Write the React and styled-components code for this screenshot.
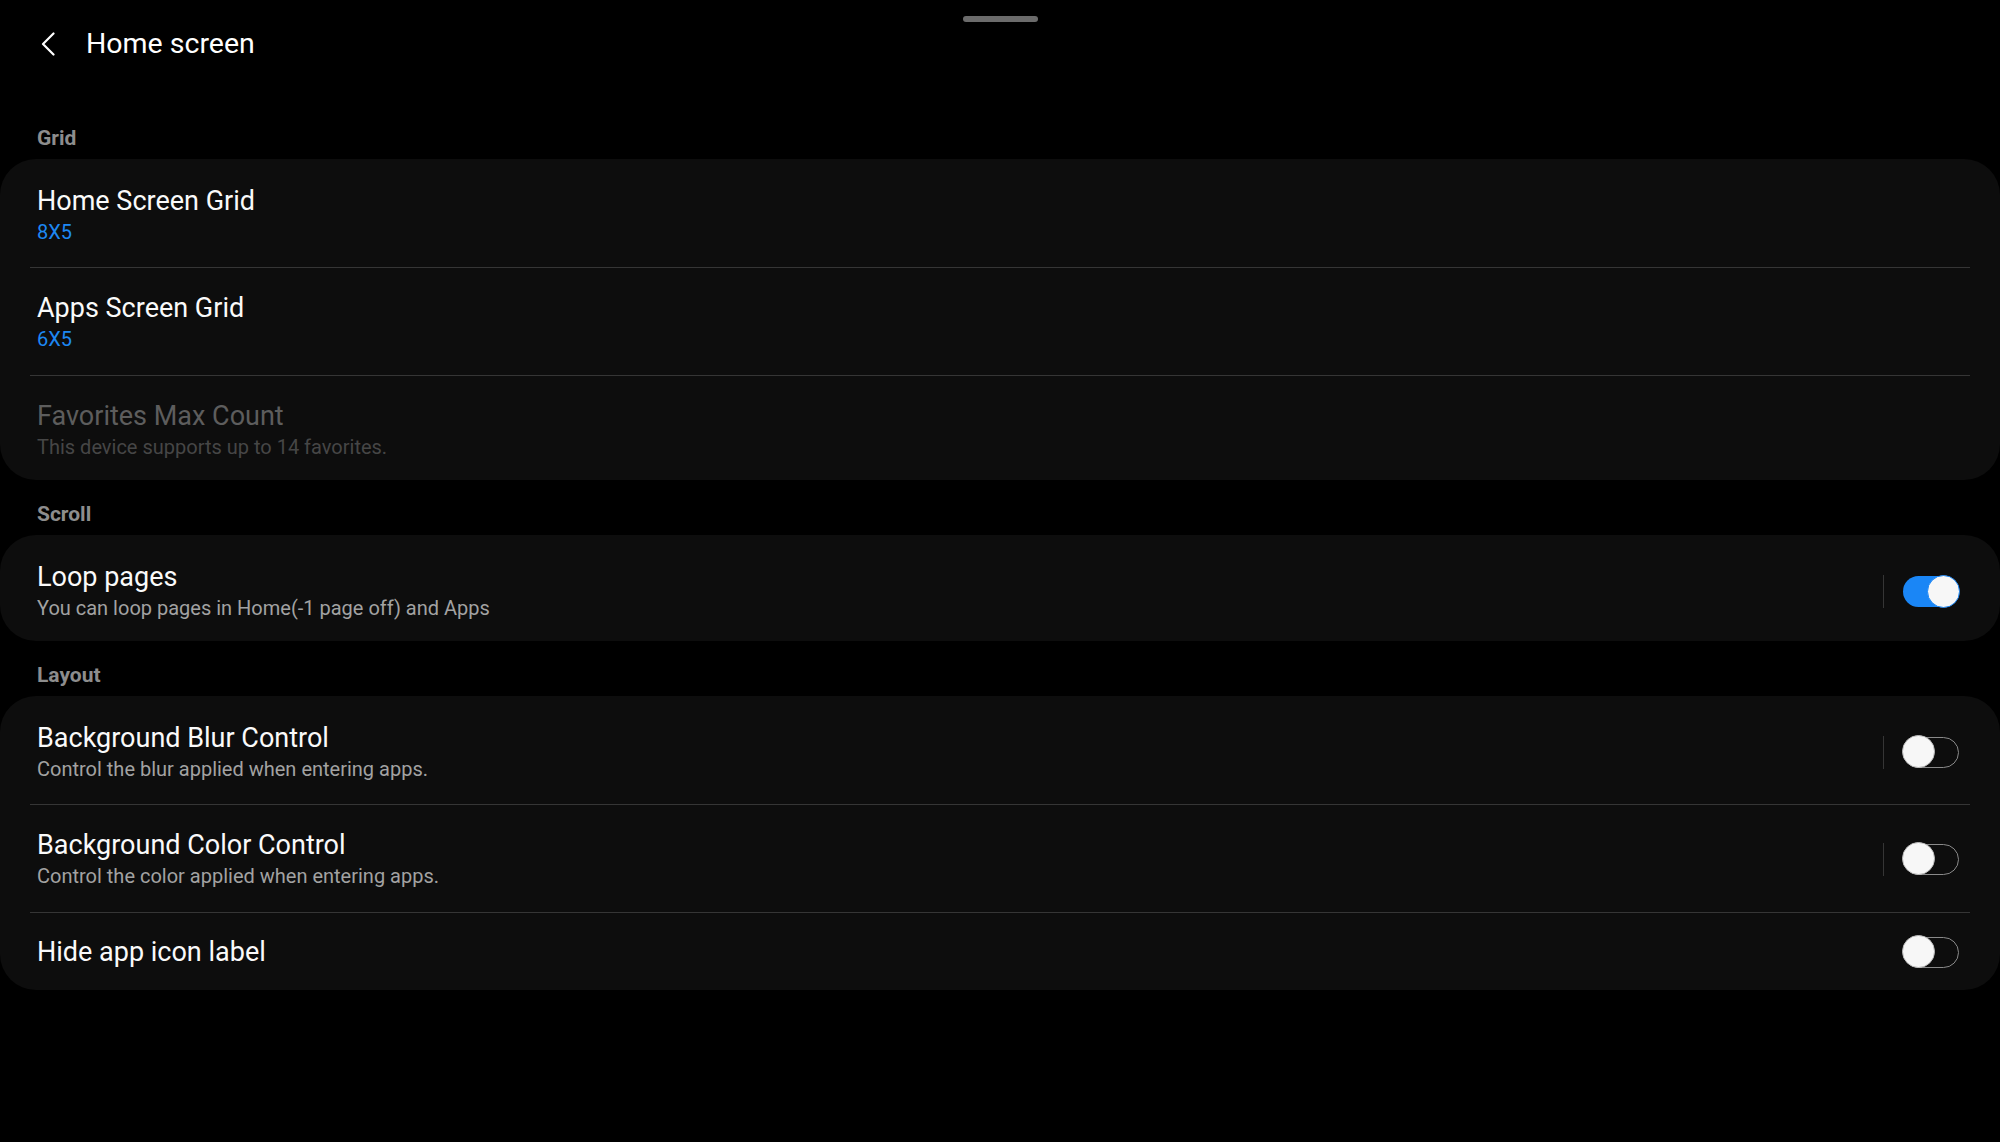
import React from "react";
import styled, { createGlobalStyle } from "styled-components";

const Global = createGlobalStyle`
  html, body { margin: 0; padding: 0; background: #000; }
  body { font-family: Roboto, "Noto Sans", "Liberation Sans", sans-serif; color: #fff; }
  * { box-sizing: border-box; }
`;

const Page = styled.div`
  width: 2000px;
  min-height: 1142px;
  background: #000;
  display: flex;
  flex-direction: column;
`;

const HandleBar = styled.div`
  display: flex;
  justify-content: center;
  padding-top: 16px;
`;

const Handle = styled.div`
  width: 75px;
  height: 6px;
  border-radius: 3px;
  background: #6b6b6b;
`;

const AppBar = styled.header`
  display: flex;
  align-items: center;
  padding: 5px 0 0 41px;
  margin-bottom: 64px;
`;

const BackButton = styled.button`
  display: flex;
  align-items: center;
  justify-content: center;
  background: none;
  border: 0;
  padding: 0;
  width: 14px;
  height: 24px;
  margin-right: 31px;
  cursor: pointer;
`;

const Title = styled.h1`
  margin: 0;
  font-size: 28.5px;
  line-height: 34px;
  font-weight: 400;
  color: #fff;
`;

const SectionLabel = styled.div`
  font-size: 21px;
  line-height: 26px;
  font-weight: 700;
  color: #8d8d8d;
  padding-left: 37px;
  margin: ${(p) => (p.$first ? "0" : "21px")} 0 8px;
`;

const Card = styled.section`
  background: #0d0d0d;
  border-radius: 36px;
  padding: 0 30px;
  display: flex;
  flex-direction: column;
`;

const rowPadding = (p) => {
  if (p.$single) return p.$divider ? "22px 0 21px" : "23px 0 21px";
  return p.$divider ? "23px 0 22px" : "25px 0 21px";
};

const Row = styled.div`
  display: flex;
  align-items: center;
  padding: ${rowPadding};
  border-top: ${(p) => (p.$divider ? "1px solid #353535" : "0")};

  &:last-child {
    padding-bottom: ${(p) => (p.$single ? "21px" : "19px")};
  }
`;

const TextBlock = styled.div`
  flex: 1;
  display: flex;
  flex-direction: column;
  padding-left: 7px;
`;

const RowTitle = styled.div`
  font-size: 27px;
  line-height: 34px;
  color: ${(p) => (p.$disabled ? "#5d5d5d" : "#fafafa")};
`;

const RowSub = styled.div`
  font-size: 20px;
  line-height: 28px;
  color: ${(p) =>
    p.$accent ? "#1d88f3" : p.$disabled ? "#464646" : "#a2a2a2"};
`;

const Controls = styled.div`
  display: flex;
  align-items: center;
  padding-right: 11px;
`;

const VLine = styled.div`
  width: 1px;
  height: 33px;
  background: #353535;
  margin-right: 19px;
`;

const Track = styled.div`
  position: relative;
  width: 56px;
  height: 31px;
  border-radius: 16px;
  background: ${(p) => (p.$on ? "#1a86f6" : "transparent")};
  border: ${(p) => (p.$on ? "none" : "1.5px solid #8a8a8a")};
`;

const Thumb = styled.div`
  position: absolute;
  top: ${(p) => (p.$on ? "-1px" : "-2.5px")};
  ${(p) => (p.$on ? "right: -1px;" : "left: -2.5px;")}
  width: 33px;
  height: 33px;
  border-radius: 50%;
  background: #f7f7f7;
  border: 1.5px solid ${(p) => (p.$on ? "#1a86f6" : "#bdbdbd")};
`;

function Toggle({ on }) {
  return (
    <Track $on={on}>
      <Thumb $on={on} />
    </Track>
  );
}

function SettingRow({ title, sub, accent, disabled, divider, toggle, on, vline }) {
  return (
    <Row $divider={divider} $single={!sub}>
      <TextBlock>
        <RowTitle $disabled={disabled}>{title}</RowTitle>
        {sub && (
          <RowSub $accent={accent} $disabled={disabled}>
            {sub}
          </RowSub>
        )}
      </TextBlock>
      {toggle && (
        <Controls>
          {vline && <VLine />}
          <Toggle on={on} />
        </Controls>
      )}
    </Row>
  );
}

export default function App() {
  return (
    <Page>
      <Global />
      <HandleBar>
        <Handle />
      </HandleBar>
      <AppBar>
        <BackButton aria-label="Back">
          <svg width="14" height="24" viewBox="0 0 14 24" fill="none">
            <path d="M12.5 1.5 L2 12 L12.5 22.5" stroke="#fff" strokeWidth="2.2" strokeLinecap="round" strokeLinejoin="round" />
          </svg>
        </BackButton>
        <Title>Home screen</Title>
      </AppBar>

      <SectionLabel $first>Grid</SectionLabel>
      <Card>
        <SettingRow title="Home Screen Grid" sub="8X5" accent />
        <SettingRow title="Apps Screen Grid" sub="6X5" accent divider />
        <SettingRow
          title="Favorites Max Count"
          sub="This device supports up to 14 favorites."
          disabled
          divider
        />
      </Card>

      <SectionLabel>Scroll</SectionLabel>
      <Card>
        <SettingRow
          title="Loop pages"
          sub="You can loop pages in Home(-1 page off) and Apps"
          toggle
          on
          vline
        />
      </Card>

      <SectionLabel>Layout</SectionLabel>
      <Card>
        <SettingRow
          title="Background Blur Control"
          sub="Control the blur applied when entering apps."
          toggle
          vline
        />
        <SettingRow
          title="Background Color Control"
          sub="Control the color applied when entering apps."
          toggle
          vline
          divider
        />
        <SettingRow title="Hide app icon label" toggle divider />
      </Card>
    </Page>
  );
}
